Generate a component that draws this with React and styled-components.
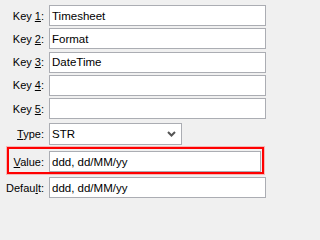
import styled, {createGlobalStyle} from 'styled-components'

const GlobalStyle = createGlobalStyle`
  html, body {
    margin: 0;
    padding: 0;
    background: #f0f0f0;
  }
  body {
    font-family: "Liberation Sans", Arial, sans-serif;
    font-size: 11px;
    color: #000;
  }
`;

const fields = [
  {pre: 'Key ', key: '1', post: ':', value: 'Timesheet'},
  {pre: 'Key ', key: '2', post: ':', value: 'Format'},
  {pre: 'Key ', key: '3', post: ':', value: 'DateTime'},
  {pre: 'Key ', key: '4', post: ':', value: ''},
  {pre: 'Key ', key: '5', post: ':', value: ''},
]

const Label = ({pre, k, post}) => (
  <LabelText>{pre}<u>{k}</u>{post}</LabelText>
)

const App = () => {
  return (
    <>
      <GlobalStyle/>
      <Form>
        <KeyList>
          {fields.map(f => (
            <Row key={f.key}>
              <Label pre={f.pre} k={f.key} post={f.post}/>
              <TextBox>{f.value}</TextBox>
            </Row>
          ))}
        </KeyList>
        <Row $top={4}>
          <Label pre="" k="T" post="ype:"/>
          <Select>
            <span>STR</span>
            <svg width="9" height="6" viewBox="0 0 9 6">
              <path d="M1 1 L4.5 4.5 L8 1" fill="none" stroke="#555" strokeWidth="2"/>
            </svg>
          </Select>
        </Row>
        <Highlight>
          <Row $label={35}>
            <Label pre="" k="V" post="alue:"/>
            <TextBox>ddd, dd/MM/yy</TextBox>
          </Row>
        </Highlight>
        <Row $top={3}>
          <Label pre="Defau" k="l" post="t:"/>
          <TextBox>ddd, dd/MM/yy</TextBox>
        </Row>
      </Form>
    </>
  )
}

const Form = styled.div`
  width: 271px;
  height: 202px;
  box-sizing: border-box;
  padding: 5px 5px 0 0;
  display: flex;
  flex-direction: column;
`;

const KeyList = styled.div`
  display: flex;
  flex-direction: column;
  gap: 2.3px;
`;

const Row = styled.div`
  display: grid;
  grid-template-columns: ${props => props.$label || 44}px 1fr;
  column-gap: 5px;
  align-items: center;
  margin-top: ${props => props.$top || 0}px;
`;

const LabelText = styled.span`
  text-align: right;
  white-space: nowrap;
  u {
    text-underline-offset: 1px;
  }
`;

const TextBox = styled.div`
  height: 21px;
  box-sizing: border-box;
  border: 1px solid #abadb3;
  background: #fff;
  padding: 0 2px;
  display: flex;
  align-items: center;
  font-size: 11.5px;
`;

const Select = styled.div`
  width: 133px;
  height: 22px;
  box-sizing: border-box;
  border: 1px solid #abadb3;
  background: #fff;
  padding: 0 5px 0 2px;
  display: flex;
  align-items: center;
  justify-content: space-between;
  font-size: 11.5px;
`;

const Highlight = styled.div`
  margin: 2px 2px 0 7px;
  border: 2px solid #ff0000;
  box-shadow: 0 0 0 1px rgba(255, 80, 80, 0.35);
  padding: 2px 1px 0 0;
`;

export default App;
